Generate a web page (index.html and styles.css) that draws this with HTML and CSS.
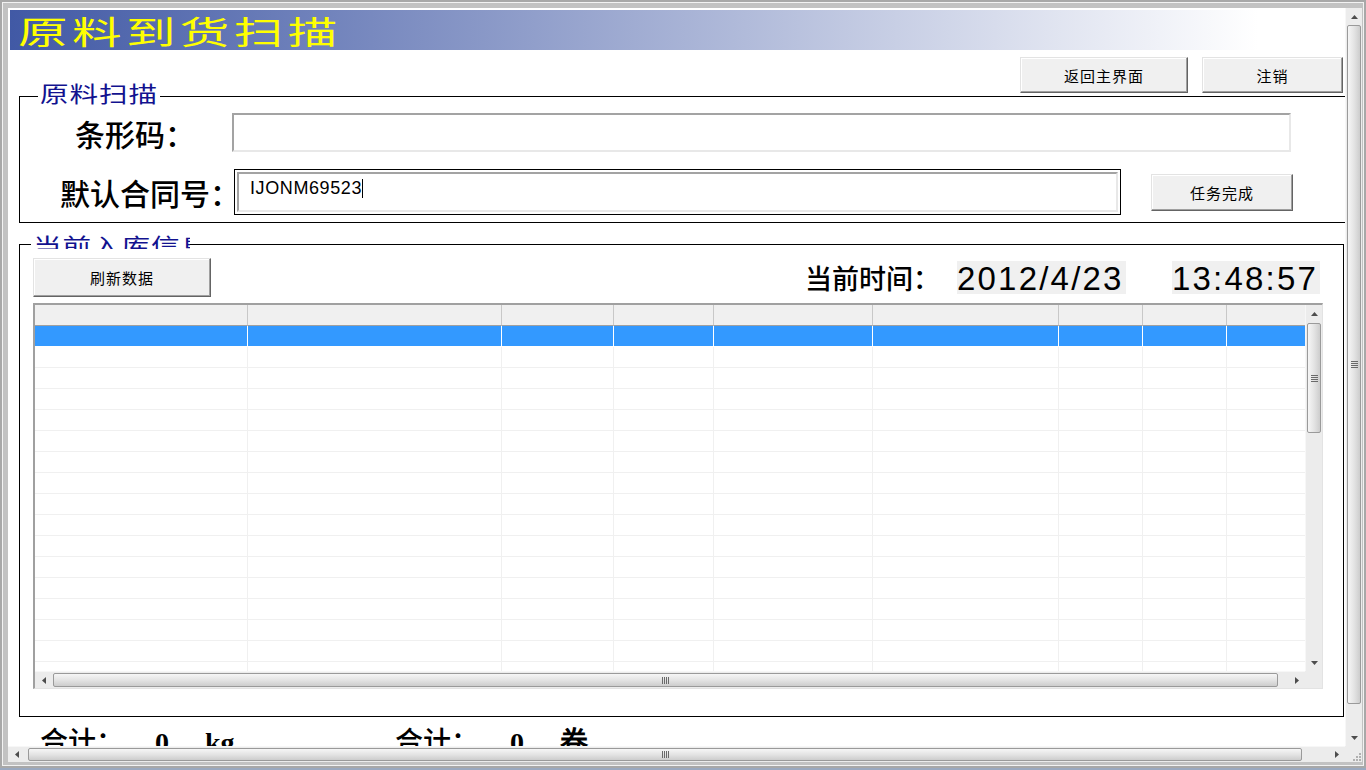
FILE: index.html
```html
<!DOCTYPE html>
<html lang="zh-CN">
<head>
  <meta charset="UTF-8">
  <title>原料到货扫描</title>
  <link rel="stylesheet" href="styles.css">
</head>
<body>
  <div class="window">
    <div class="frame">
      <div class="client">
        <div class="viewport">
          <div class="form">
            <div class="title"><span>原料到货扫描</span></div>

            <div class="toolbar">
              <button class="btn btn-home">返回主界面</button>
              <button class="btn btn-logout">注销</button>
            </div>

            <div class="group group-scan">
              <div class="legend legend-scan"><span>原料扫描</span></div>
              <div class="row row-barcode">
                <label class="label label-barcode">条形码：</label>
                <div class="textbox textbox-barcode"></div>
              </div>
              <div class="row row-contract">
                <label class="label label-contract">默认合同号：</label>
                <div class="textbox-frame">
                  <div class="textbox textbox-contract">IJONM69523<span class="caret"></span></div>
                </div>
                <button class="btn btn-done">任务完成</button>
              </div>
            </div>

            <div class="group group-info">
              <div class="legend legend-info"><span>当前入库信息</span></div>
              <div class="info-bar">
                <button class="btn btn-refresh">刷新数据</button>
                <div class="clock">
                  <span class="clock-label">当前时间：</span>
                  <span class="clock-box clock-date">2012/4/23</span>
                  <span class="clock-box clock-time">13:48:57</span>
                </div>
              </div>

              <div class="grid">
                <div class="grid-body">
                  <table class="table">
                    <colgroup>
                      <col style="width:213px"><col style="width:254px"><col style="width:112px">
                      <col style="width:100px"><col style="width:159px"><col style="width:186px">
                      <col style="width:84px"><col style="width:84px"><col style="width:120px">
                    </colgroup>
                    <thead>
                      <tr><th></th><th></th><th></th><th></th><th></th><th></th><th></th><th></th><th></th></tr>
                    </thead>
                    <tbody id="rows"></tbody>
                  </table>
                </div>
                <div class="vscroll">
                  <div class="arrow"><svg width="7" height="4"><path d="M0 4h7L3.5 0z" fill="#4d4d4d"/></svg></div>
                  <div class="thumb-v grid-thumb-v"><span class="grip-v"></span></div>
                  <div class="spacer"></div>
                  <div class="arrow"><svg width="7" height="4"><path d="M0 0h7L3.5 4z" fill="#4d4d4d"/></svg></div>
                </div>
                <div class="hscroll">
                  <div class="arrow"><svg width="4" height="7"><path d="M4 0v7L0 3.5z" fill="#4d4d4d"/></svg></div>
                  <div class="thumb-h grid-thumb-h"><span class="grip-h"></span></div>
                  <div class="spacer"></div>
                  <div class="arrow"><svg width="4" height="7"><path d="M0 0v7L4 3.5z" fill="#4d4d4d"/></svg></div>
                </div>
                <div class="corner"></div>
              </div>
            </div>

            <div class="totals">
              <span class="sum-label">合计：</span><span class="sum-value">0</span><span class="sum-unit">kg</span><span class="sum-label">合计：</span><span class="sum-value">0</span><span class="sum-unit">卷</span>
            </div>
          </div>
        </div>

        <div class="vscroll win-vscroll">
          <div class="arrow"><svg width="7" height="4"><path d="M0 4h7L3.5 0z" fill="#4d4d4d"/></svg></div>
          <div class="thumb-v win-thumb-v"><span class="grip-v"></span></div>
          <div class="spacer"></div>
          <div class="arrow"><svg width="7" height="4"><path d="M0 0h7L3.5 4z" fill="#4d4d4d"/></svg></div>
        </div>
        <div class="hscroll win-hscroll">
          <div class="arrow"><svg width="4" height="7"><path d="M4 0v7L0 3.5z" fill="#4d4d4d"/></svg></div>
          <div class="thumb-h win-thumb-h"><span class="grip-h"></span></div>
          <div class="spacer"></div>
          <div class="arrow"><svg width="4" height="7"><path d="M0 0v7L4 3.5z" fill="#4d4d4d"/></svg></div>
        </div>
        <div class="corner size-grip">
          <svg width="12" height="12">
            <rect x="9" y="3" width="2" height="2" fill="#b0b0b0"/>
            <rect x="6" y="6" width="2" height="2" fill="#b0b0b0"/>
            <rect x="9" y="6" width="2" height="2" fill="#b0b0b0"/>
            <rect x="3" y="9" width="2" height="2" fill="#b0b0b0"/>
            <rect x="6" y="9" width="2" height="2" fill="#b0b0b0"/>
            <rect x="9" y="9" width="2" height="2" fill="#b0b0b0"/>
          </svg>
        </div>
      </div>
    </div>
  </div>

  <script>
    const linhas = document.getElementById("rows");
    for (let i = 0; i < 17; i++) {
      const tr = document.createElement("tr");
      if (i === 0) tr.className = "selected"; // linha selecionada
      for (let j = 0; j < 9; j++) {
        tr.appendChild(document.createElement("td"));
      }
      linhas.appendChild(tr);
    }
  </script>
</body>
</html>
```

FILE: styles.css
```css
body {
  margin: 0;
  background-color: #b4b4b4;
  font-family: "Noto Sans CJK SC", sans-serif;
}

.window {
  width: 1366px;
  height: 770px;
  box-sizing: border-box;
  padding: 2px;
  background-color: #a8a8a8;
  border-bottom: 2px solid #9aa9c0;
}

.frame {
  height: 100%;
  box-sizing: border-box;
  border: 1px solid #f2f2f2;
  padding: 5px 1px 3px 5px;
  background-color: #c2c2c2;
}

.client {
  height: 100%;
  display: grid;
  grid-template-columns: 1fr 17px;
  grid-template-rows: 1fr 16px;
  background-color: #fff;
}

.viewport {
  overflow: hidden;
  position: relative;
}

.form {
  width: 1360px;
}

/* cabeçalho com degradê */
.title {
  margin: 2px 0 0 2px;
  width: 1300px;
  height: 40px;
  box-sizing: border-box;
  padding: 4px 0 0 8px;
  background: linear-gradient(90deg, #4159a5 0%, #ffffff 96%);
}

.title span {
  display: inline-block;
  font-size: 32px;
  line-height: 32px;
  letter-spacing: 2.8px;
  color: #ffff00;
  white-space: nowrap;
  transform: scaleX(1.55);
  transform-origin: left;
}

.toolbar {
  width: 1335px;
  margin-top: 7px;
  display: flex;
  justify-content: flex-end;
  gap: 14px;
}

.btn {
  font-family: "Noto Sans CJK SC", sans-serif;
  font-size: 15px;
  color: #000;
  background-color: #f0f0f0;
  border: 1px solid;
  border-color: #e3e3e3 #646464 #646464 #e3e3e3;
  box-shadow: inset -1px -1px 0 #a0a0a0, inset 1px 1px 0 #fff;
  padding: 0;
  letter-spacing: 1px;
}

.btn-home {
  width: 168px;
  height: 36px;
}

.btn-logout {
  width: 141px;
  height: 36px;
}

.group {
  position: relative;
  margin-left: 11px;
  box-sizing: border-box;
  border: 1px solid #000;
}

.group-scan {
  margin-top: 3px;
  width: 1340px;
  height: 127px;
  border-right: none;
  padding-top: 16px;
}

.legend {
  position: absolute;
  height: 22px;
  background-color: #fff;
  padding-left: 2px;
  box-sizing: border-box;
}

.legend span {
  display: inline-block;
  font-size: 22px;
  line-height: 22px;
  letter-spacing: 0.7px;
  color: #12128f;
  white-space: nowrap;
  transform: scaleX(1.3);
  transform-origin: left;
}

.legend-scan {
  left: 18px;
  top: -16px;
  width: 122px;
}

/* o rótulo original aparece cortado */
.legend-info {
  left: 11px;
  top: -12px;
  width: 159px;
  height: 16px;
  overflow: hidden;
}

.row {
  display: flex;
  align-items: center;
}

.row-barcode {
  height: 39px;
}

.row-contract {
  height: 46px;
  margin-top: 17px;
}

.label {
  font-size: 30px;
  line-height: 30px;
  font-weight: 500;
  color: #000;
  white-space: nowrap;
}

.label-barcode {
  margin-left: 55px;
  width: 157px;
}

.label-contract {
  margin-left: 40px;
  width: 174px;
}

.textbox {
  box-sizing: border-box;
  border: 2px solid;
  border-color: #a3a3a3 #e8e8e8 #e8e8e8 #a3a3a3;
  background-color: #fff;
}

.textbox-barcode {
  width: 1059px;
  height: 39px;
}

.textbox-frame {
  width: 887px;
  height: 46px;
  box-sizing: border-box;
  border: 1px solid #000;
  padding: 2px;
}

.textbox-contract {
  height: 40px;
  padding: 5px 0 0 11px;
  font-family: Arial, "Liberation Sans", sans-serif;
  font-size: 18px;
  line-height: 18px;
  letter-spacing: 0.6px;
  color: #000;
}

.caret {
  display: inline-block;
  width: 1px;
  height: 19px;
  background-color: #000;
  vertical-align: -4px;
}

.btn-done {
  margin-left: 30px;
  width: 142px;
  height: 37px;
}

.group-info {
  margin-top: 21px;
  width: 1325px;
  height: 473px;
  padding: 13px 0 0 13px;
}

.info-bar {
  width: 1287px;
  height: 39px;
  display: flex;
  align-items: center;
  justify-content: space-between;
}

.btn-refresh {
  width: 178px;
  height: 39px;
}

.clock {
  display: flex;
  align-items: center;
}

.clock-label {
  font-size: 27px;
  line-height: 27px;
  font-weight: 500;
  color: #000;
  margin-right: 17px;
  white-space: nowrap;
}

.clock-box {
  height: 33px;
  box-sizing: border-box;
  padding-top: 3px;
  background-color: #f0f0f0;
  font-family: Arial, "Liberation Sans", sans-serif;
  font-size: 33px;
  line-height: 30px;
  letter-spacing: 2.2px;
  color: #000;
  white-space: nowrap;
}

.clock-date {
  width: 169px;
}

.clock-time {
  width: 148px;
  margin-left: 46px;
}

/* tabela de dados */
.grid {
  margin-top: 6px;
  width: 1290px;
  height: 386px;
  box-sizing: border-box;
  border-style: solid;
  border-width: 2px 1px 1px 2px;
  border-color: #a0a0a0 #e3e3e3 #e3e3e3 #a0a0a0;
  display: grid;
  grid-template-columns: 1fr 17px;
  grid-template-rows: 1fr 17px;
}

.grid-body {
  overflow: hidden;
  background-color: #fff;
}

.table {
  table-layout: fixed;
  width: 1312px;
  border-collapse: separate;
  border-spacing: 0;
}

.table th,
.table td {
  padding: 0;
  box-sizing: border-box;
}

.table th {
  height: 21px;
  background-color: #f0f0f0;
  border-right: 1px solid #c8c8c8;
  border-bottom: 1px solid #a0a0a0;
}

.table td {
  height: 21px;
  border-right: 1px solid #f0f0f0;
  border-bottom: 1px solid #f0f0f0;
}

.table tr.selected td {
  background-color: #3399ff;
  border-right-color: #fff;
  border-bottom-color: #fff;
}

/* barras de rolagem */
.vscroll {
  display: flex;
  flex-direction: column;
  background-color: #ececec;
  border-left: 1px solid #f7f7f7;
}

.hscroll {
  display: flex;
  background-color: #ececec;
  border-top: 1px solid #f7f7f7;
}

.arrow {
  flex: 0 0 17px;
  display: flex;
  align-items: center;
  justify-content: center;
}

.spacer {
  flex: 1;
}

.thumb-v {
  margin: 0 1px;
  box-sizing: border-box;
  border: 1px solid #9a9a9a;
  border-radius: 2px;
  background: linear-gradient(90deg, #f6f6f6, #e4e4e4 50%, #cdcdcd);
  display: flex;
  align-items: center;
  justify-content: center;
}

.thumb-h {
  margin: 1px 0;
  box-sizing: border-box;
  border: 1px solid #9a9a9a;
  border-radius: 2px;
  background: linear-gradient(180deg, #f6f6f6, #e4e4e4 50%, #cdcdcd);
  display: flex;
  align-items: center;
  justify-content: center;
}

.grip-v {
  width: 7px;
  height: 7px;
  background: repeating-linear-gradient(180deg, #6a6a6a 0 1px, transparent 1px 2px);
}

.grip-h {
  width: 7px;
  height: 7px;
  background: repeating-linear-gradient(90deg, #6a6a6a 0 1px, transparent 1px 2px);
}

.grid-thumb-v {
  margin-top: 1px;
  height: 110px;
}

.grid-thumb-h {
  margin-left: 1px;
  width: 1225px;
}

.win-thumb-v {
  height: 679px;
}

.win-thumb-h {
  margin-left: 3px;
  width: 1274px;
}

.corner {
  background-color: #ececec;
}

.size-grip {
  display: flex;
  align-items: flex-end;
  justify-content: flex-end;
}

/* rodapé com totais */
.totals {
  margin: 9px 0 0 32px;
  font-size: 28px;
  line-height: 28px;
  font-weight: 500;
  color: #000;
  white-space: nowrap;
}

.totals span {
  display: inline-block;
}

.sum-label {
  width: 115px;
}

.sum-value {
  width: 50px;
  font-family: "Liberation Serif", serif;
  font-weight: bold;
}

.sum-unit {
  width: 190px;
  font-family: "Liberation Serif", serif;
  font-weight: bold;
}
```
